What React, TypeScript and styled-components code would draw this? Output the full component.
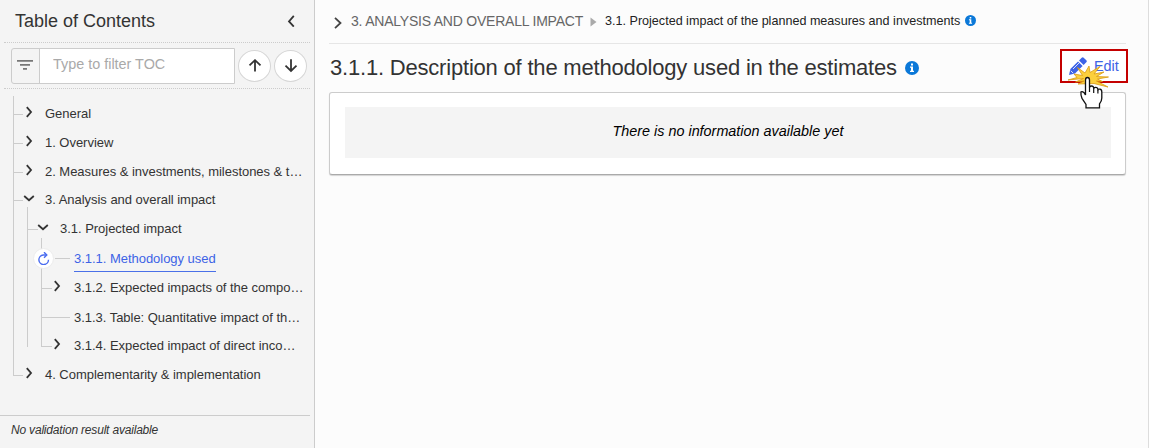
import React from 'react';
import styled, { createGlobalStyle } from 'styled-components';

const GlobalStyle = createGlobalStyle`
  * { box-sizing: border-box; }
  body {
    margin: 0;
    background: #fcfcfc;
    color: #333;
    font-family: "Liberation Sans", Arial, sans-serif;
    overflow: hidden;
  }
  ul { list-style: none; margin: 0; padding: 0; }
  svg { display: block; flex: none; }
`;

const Page = styled.div`
  display: flex;
  width: 1149px;
  height: 448px;
`;

const Sidebar = styled.aside`
  display: flex;
  flex-direction: column;
  width: 315px;
  flex: none;
  background: #f4f4f4;
  border-right: 1px solid #ccc;
`;

const SidebarHeader = styled.header`
  display: flex;
  align-items: center;
  justify-content: space-between;
  height: 43px;
  margin: 0 4px;
  padding: 0 14px 0 11px;
  border-bottom: 1px dotted #ccc;
`;

const SidebarTitle = styled.h2`
  margin: 0;
  font-size: 18px;
  font-weight: 400;
  line-height: 42px;
`;

const FilterBar = styled.div`
  display: flex;
  align-items: center;
  height: 46px;
  margin: 0 4px;
  padding: 0 3px 0 7px;
  border-bottom: 1px dotted #ccc;
`;

const FilterBox = styled.div`
  display: flex;
  width: 224px;
  height: 36px;
  border: 1px solid #ccc;
  border-radius: 3px 0 0 3px;
`;

const FilterIcon = styled.span`
  display: flex;
  align-items: center;
  justify-content: center;
  width: 28px;
  padding: 0 2px 2px 0;
  border-right: 1px solid #ccc;
`;

const FilterInput = styled.input`
  flex: 1;
  min-width: 0;
  padding: 0 13px 4px;
  border: 0;
  background: #fff;
  font: 14.4px "Liberation Sans", Arial, sans-serif;
  outline: none;
  &::placeholder { color: #a9a9a9; opacity: 1; }
`;

const RoundButton = styled.button`
  display: flex;
  align-items: center;
  justify-content: center;
  width: 33px;
  height: 32px;
  margin-left: 3px;
  padding: 0;
  border: 1px solid #d6d6d6;
  border-radius: 50%;
  background: #fff;
`;

const Tree = styled.nav`
  flex: 1;
  padding: 7px 0 0 13px;
`;

const Branch = styled.ul<{ $tail: number; $nested?: boolean }>`
  margin: ${p => (p.$nested ? '-6px 0 0 14px' : '0')};
  padding-top: ${p => (p.$nested ? 6 : 3)}px;
  background: linear-gradient(#ccc, #ccc) 0 0 / 1px calc(100% - ${p => p.$tail}px) no-repeat;
`;

const Row = styled.div<{ $height: number }>`
  display: flex;
  align-items: center;
  height: ${p => p.$height}px;
`;

const Stub = styled.span<{ $width: number; $raised?: boolean }>`
  flex: none;
  width: ${p => p.$width}px;
  height: 1px;
  margin-top: ${p => (p.$raised ? 0 : 2)}px;
  background: #ccc;
`;

const Toggle = styled.span<{ $nested: boolean }>`
  display: flex;
  justify-content: center;
  flex: none;
  width: 12px;
  margin: -3px ${p => (p.$nested ? 11 : 10)}px 0 ${p => (p.$nested ? -1 : 0)}px;
`;

const Gap = styled.span`
  flex: none;
  width: 4px;
`;

const Progress = styled.span`
  display: flex;
  align-items: center;
  justify-content: center;
  flex: none;
  width: 21px;
  height: 21px;
  margin: 0 1px 0 -8px;
  border: 1px solid #ececec;
  border-radius: 50%;
  background: #fff;
`;

const Label = styled.span<{ $current?: boolean }>`
  white-space: nowrap;
  font-size: 13px;
  letter-spacing: -0.03px;
  line-height: ${p => (p.$current ? 25 : 26)}px;
  color: ${p => (p.$current ? '#3d63e6' : '#333')};
  ${p => p.$current && 'border-bottom: 1px solid #4a70e8;'}
`;

const Validation = styled.footer`
  height: 33px;
  margin-right: 4px;
  padding-left: 11px;
  border-top: 1px solid #ccc;
  font-size: 12px;
  font-style: italic;
  letter-spacing: -0.19px;
  line-height: 28px;
`;

const Main = styled.main`
  flex: 1;
  padding: 0 22px 0 14px;
  border-right: 1px solid #ddd;
`;

const Breadcrumb = styled.div`
  display: flex;
  align-items: center;
  height: 44px;
  padding-left: 4px;
  border-bottom: 1px solid #e6e6e6;
`;

const HomeMark = styled.span`
  margin: 3px 8px 0 0;
`;

const CrumbArrow = styled.span`
  margin: 0 8px 0 7px;
`;

const CrumbInfo = styled.span`
  margin: -3px 0 0 5px;
`;

const Crumb = styled.span<{ $current?: boolean }>`
  white-space: nowrap;
  font-size: ${p => (p.$current ? 12.59 : 14)}px;
  letter-spacing: ${p => (p.$current ? 0 : -0.22)}px;
  line-height: 42px;
  color: ${p => (p.$current ? '#222' : '#666')};
  margin-top: -1px;
`;

const TitleRow = styled.div`
  display: flex;
  align-items: center;
  height: 48px;
`;

const Title = styled.h1`
  margin: 0 8px 0 1px;
  font-size: 22px;
  font-weight: 400;
  letter-spacing: -0.197px;
  line-height: 46px;
  white-space: nowrap;
`;

const EditButton = styled.button`
  position: relative;
  display: flex;
  align-items: center;
  gap: 7px;
  width: 68px;
  height: 34px;
  margin: -4px -2px 0 auto;
  padding: 0 0 0 7px;
  border: 2px solid #c40000;
  background: #fff;
  color: #3d63e6;
  font: 14.4px "Liberation Sans", Arial, sans-serif;
`;

const Pointer = styled.svg`
  position: absolute;
  left: 4px;
  top: 9px;
`;

const Card = styled.section`
  height: 83px;
  padding: 14px 14px 0 15px;
  border: 1px solid #ccc;
  border-bottom-color: #aaa;
  border-radius: 3px;
  background: #fff;
  box-shadow: 0 1px 1px rgba(0, 0, 0, 0.16);
`;

const Empty = styled.p`
  height: 51px;
  margin: 0;
  background: #f4f4f4;
  color: #000;
  font-size: 14.38px;
  font-style: italic;
  line-height: 48px;
  text-align: center;
`;

const Chevron = ({ down }: { down?: boolean }) => (
  <svg width="12" height="12" viewBox="0 0 12 12" fill="none" stroke="#333" strokeWidth="1.8">
    <path d={down ? 'M1.2 4l4.8 4.200 4.800-4.200' : 'M3.800 1.200l4.200 4.800-4.200 4.800'} />
  </svg>
);

const Info = ({ size }: { size: number }) => (
  <svg width={size} height={size} viewBox="0 0 14 14">
    <circle cx="7" cy="7" r="7" fill="#0b78d8" />
    <path d="M6 2.5h2v2H6zM5 5.5h3v4.3h1v1.3H5V9.8h1V6.8H5z" fill="#fff" />
  </svg>
);

const Arrow = ({ down }: { down?: boolean }) => (
  <svg width="14" height="14" viewBox="0 0 14 14" fill="none" stroke="#333" strokeWidth="1.8">
    <path d={down ? 'M7 .3v11.5M1.500 6.700L7 11.900l5.500-5.200' : 'M7 12.500V1.200M1.500 6.400L7 1.200l5.500 5.200'} />
  </svg>
);

const Pencil = () => (
  <svg width="18" height="18" viewBox="0 0 18 18" fill="#3d63e6">
    <path d="M0 18l1.400-6L9 4.400l4.600 4.600L6 16.600z" />
    <path d="M10 3.400L12.700.7q1-1 2 0l2.600 2.600q1 1 0 2L14.600 8z" />
    <path d="M4 12l6.500-6.500M1.800 13.800l2.400 2.400" stroke="#fff" strokeWidth=".8" />
  </svg>
);

type Item = {
  text: string;
  height: number;
  kind?: 'leaf' | 'current';
  tail?: number;
  children?: Item[];
};

const items: Item[] = [
  { text: 'General', height: 29 },
  { text: '1. Overview', height: 29 },
  { text: '2. Measures & investments, milestones & t…', height: 29 },
  {
    text: '3. Analysis and overall impact',
    height: 27,
    tail: 11,
    children: [
      {
        text: '3.1. Projected impact',
        height: 31,
        tail: 11,
        children: [
          { text: '3.1.1. Methodology used', height: 29, kind: 'current' },
          { text: '3.1.2. Expected impacts of the compo…', height: 29 },
          { text: '3.1.3. Table: Quantitative impact of th…', height: 31, kind: 'leaf' },
          { text: '3.1.4. Expected impact of direct inco…', height: 25 },
        ],
      },
    ],
  },
  { text: '4. Complementarity & implementation', height: 33 },
];

const TreeItem = ({ item, nested = false }: { item: Item; nested?: boolean }) => {
  const current = item.kind === 'current';
  const stub = current ? 15 : item.kind === 'leaf' ? 29 : nested ? 11 : 10;
  return (
    <li>
      <Row $height={item.height}>
        {current && (
          <Progress>
            <svg width="13" height="13" viewBox="0 0 13 13" fill="none" stroke="#4a6cf0" strokeWidth="1.4">
              <path d="M9.500 3H6.200a4.800 4.800 0 1 0 5.300 4.800" />
              <path d="M7 .2L9.800 3 7 5.800" />
            </svg>
          </Progress>
        )}
        <Stub $width={stub} $raised={current || item.kind === 'leaf'} />
        {item.kind ? <Gap /> : <Toggle $nested={nested}><Chevron down={!!item.children} /></Toggle>}
        <Label $current={current}>{item.text}</Label>
      </Row>
      {item.children && (
        <Branch $nested $tail={item.tail ?? 0}>
          {item.children.map(child => <TreeItem key={child.text} item={child} nested />)}
        </Branch>
      )}
    </li>
  );
};

export default function App() {
  return (
    <Page>
      <GlobalStyle />
      <Sidebar>
        <SidebarHeader>
          <SidebarTitle>Table of Contents</SidebarTitle>
          <svg width="10" height="12" viewBox="0 0 10 12" fill="none" stroke="#333" strokeWidth="1.8">
            <path d="M7.800 .9L3 6.400l4.800 5.200" />
          </svg>
        </SidebarHeader>
        <FilterBar>
          <FilterBox>
            <FilterIcon>
              <svg width="16" height="10" viewBox="0 0 16 10" fill="#777">
                <path d="M0 0h16v1.700H0zM3 4h10v1.700H3zM6 8h4v1.700H6z" />
              </svg>
            </FilterIcon>
            <FilterInput placeholder="Type to filter TOC" />
          </FilterBox>
          <RoundButton><Arrow /></RoundButton>
          <RoundButton><Arrow down /></RoundButton>
        </FilterBar>
        <Tree>
          <Branch $tail={16}>
            {items.map(item => <TreeItem key={item.text} item={item} />)}
          </Branch>
        </Tree>
        <Validation>No validation result available</Validation>
      </Sidebar>
      <Main>
        <Breadcrumb>
          <HomeMark>
            <svg width="10" height="12" viewBox="0 0 10 12" fill="none" stroke="#444" strokeWidth="1.800">
              <path d="M2 .8l5.500 5.200L2 11.200" />
            </svg>
          </HomeMark>
          <Crumb>3. ANALYSIS AND OVERALL IMPACT</Crumb>
          <CrumbArrow>
            <svg width="7" height="10" viewBox="0 0 7 10"><path d="M.5 .5L6.500 5l-6 4.500z" fill="#aaa" /></svg>
          </CrumbArrow>
          <Crumb $current>3.1. Projected impact of the planned measures and investments</Crumb>
          <CrumbInfo><Info size={11} /></CrumbInfo>
        </Breadcrumb>
        <TitleRow>
          <Title>3.1.1. Description of the methodology used in the estimates</Title>
          <Info size={14} />
          <EditButton>
            <Pencil />
            <span>Edit</span>
            <Pointer width="44" height="50" viewBox="0 0 44 50">
              <path
                d="M11.500 7.500l7.500 5.500 4-7 1 6.500L34 6.500l-6 7.500 10-2-7.500 4.500 12 .5-11 2 5 2.500-6-.5 11.500 6-14-3.500-16 .5 6-3-8.500 1 8-3.500L2 20l9-2.500L8 14l8.500 1.500z"
                fill="#fbcf3c"
                stroke="#d99a14"
                strokeWidth=".8"
              />
              <path
                d="M19.500 33V20q0-2.500 2-2.500t2 2.500v8q0-2 2-2t2.200 2v1q0-1.600 2-1.600t2.200 2v1q0-1.500 2-1.300 1.900.3 1.900 2.800v6q0 3-2.300 6v4H20v-3.500l-4-6q-1.500-3-1-6.500 2.500-1 4.500 3z"
                fill="#fff"
                stroke="#111"
                strokeWidth="1.300"
              />
              <path d="M23.500 28v4M27.700 29v4M31.900 30v3.500" stroke="#111" strokeWidth="1.200" />
            </Pointer>
          </EditButton>
        </TitleRow>
        <Card><Empty>There is no information available yet</Empty></Card>
      </Main>
    </Page>
  );
}
